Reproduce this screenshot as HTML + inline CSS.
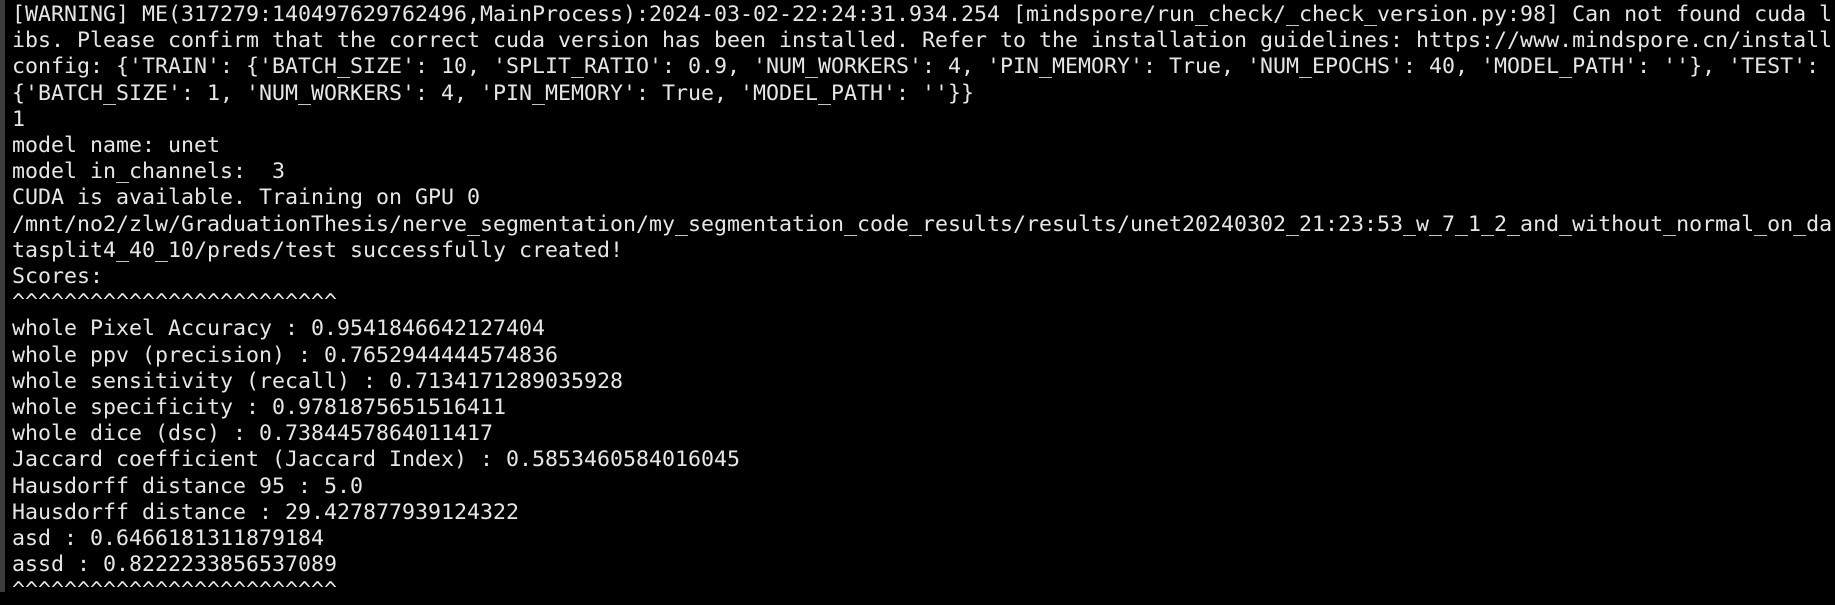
<!DOCTYPE html>
<html><head><meta charset="utf-8"><style>
html,body{margin:0;padding:0;background:#000;width:1835px;height:592px;overflow:hidden}
.strip{position:absolute;left:0;top:0;width:5px;height:592px;background:#3c3c3c}
pre{position:absolute;left:12px;top:2px;margin:0;font-family:"DejaVu Sans Mono","Liberation Mono",monospace;font-size:21.6px;line-height:26.2px;color:#e6e6e6;white-space:pre}
</style></head><body>
<div class="strip"></div>
<pre>[WARNING] ME(317279:140497629762496,MainProcess):2024-03-02-22:24:31.934.254 [mindspore/run_check/_check_version.py:98] Can not found cuda l
ibs. Please confirm that the correct cuda version has been installed. Refer to the installation guidelines: https://www.mindspore.cn/install
config: {'TRAIN': {'BATCH_SIZE': 10, 'SPLIT_RATIO': 0.9, 'NUM_WORKERS': 4, 'PIN_MEMORY': True, 'NUM_EPOCHS': 40, 'MODEL_PATH': ''}, 'TEST':
{'BATCH_SIZE': 1, 'NUM_WORKERS': 4, 'PIN_MEMORY': True, 'MODEL_PATH': ''}}
1
model name: unet
model in_channels:  3
CUDA is available. Training on GPU 0
/mnt/no2/zlw/GraduationThesis/nerve_segmentation/my_segmentation_code_results/results/unet20240302_21:23:53_w_7_1_2_and_without_normal_on_da
tasplit4_40_10/preds/test successfully created!
Scores:
^^^^^^^^^^^^^^^^^^^^^^^^^
whole Pixel Accuracy : 0.9541846642127404
whole ppv (precision) : 0.7652944444574836
whole sensitivity (recall) : 0.7134171289035928
whole specificity : 0.9781875651516411
whole dice (dsc) : 0.7384457864011417
Jaccard coefficient (Jaccard Index) : 0.5853460584016045
Hausdorff distance 95 : 5.0
Hausdorff distance : 29.427877939124322
asd : 0.6466181311879184
assd : 0.8222233856537089
^^^^^^^^^^^^^^^^^^^^^^^^^
</pre>
</body></html>
